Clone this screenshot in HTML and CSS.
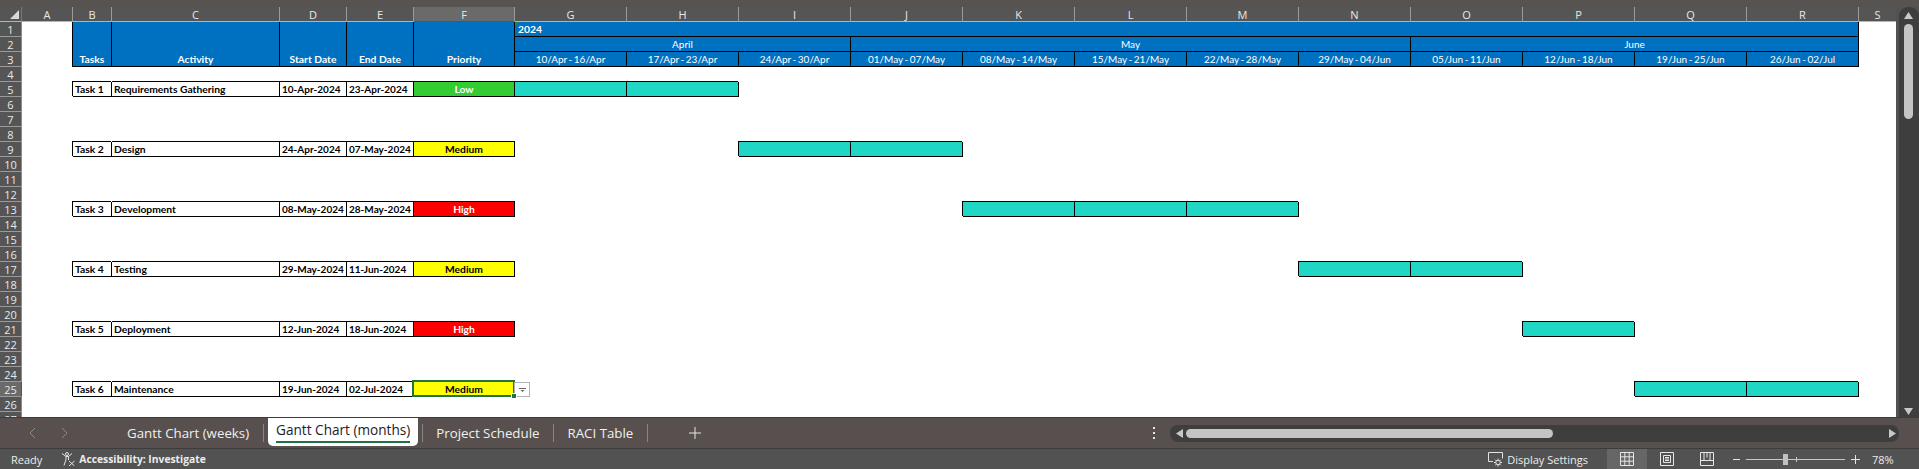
FILE: index.html
```html
<!doctype html>
<html>

<head>
  <meta charset="UTF-8">
  <title>Gantt Chart (months)</title>
  <link rel="stylesheet" href="styles.css">
</head>

<body>
  <div class="top-strip"></div>

  <div class="sheet-area">
    <div class="sheet">
      <table class="grid">
        <colgroup>
          <col class="c-rowhead">
          <col class="c-a">
          <col class="c-b">
          <col class="c-c">
          <col class="c-date">
          <col class="c-date">
          <col class="c-f">
          <col class="c-week" span="12">
          <col class="c-s">
        </colgroup>
        <thead>
          <tr>
            <th class="corner"><span class="corner-mark"></span></th>
            <th class="colhead">A</th>
            <th class="colhead">B</th>
            <th class="colhead">C</th>
            <th class="colhead">D</th>
            <th class="colhead">E</th>
            <th class="colhead colhead-on">F</th>
            <th class="colhead">G</th>
            <th class="colhead">H</th>
            <th class="colhead">I</th>
            <th class="colhead">J</th>
            <th class="colhead">K</th>
            <th class="colhead">L</th>
            <th class="colhead">M</th>
            <th class="colhead">N</th>
            <th class="colhead">O</th>
            <th class="colhead">P</th>
            <th class="colhead">Q</th>
            <th class="colhead">R</th>
            <th class="colhead colhead-last">S</th>
          </tr>
        </thead>
        <tbody>
          <tr>
            <th class="rowhead">1</th>
            <td></td>
            <td class="head head-first" rowspan="3">Tasks</td>
            <td class="head" rowspan="3">Activity</td>
            <td class="head" rowspan="3">Start Date</td>
            <td class="head" rowspan="3">End Date</td>
            <td class="head" rowspan="3">Priority</td>
            <td class="year" colspan="12"><span class="flag"></span>2024</td>
          </tr>
          <tr>
            <th class="rowhead">2</th>
            <td></td>
            <td class="band" colspan="3">April</td>
            <td class="band" colspan="5">May</td>
            <td class="band" colspan="4">June</td>
          </tr>
          <tr>
            <th class="rowhead">3</th>
            <td></td>
            <td class="band">10/Apr - 16/Apr</td>
            <td class="band">17/Apr - 23/Apr</td>
            <td class="band">24/Apr - 30/Apr</td>
            <td class="band">01/May - 07/May</td>
            <td class="band">08/May - 14/May</td>
            <td class="band">15/May - 21/May</td>
            <td class="band">22/May - 28/May</td>
            <td class="band">29/May - 04/Jun</td>
            <td class="band">05/Jun - 11/Jun</td>
            <td class="band">12/Jun - 18/Jun</td>
            <td class="band">19/Jun - 25/Jun</td>
            <td class="band">26/Jun - 02/Jul</td>
          </tr>
          <tr><th class="rowhead">4</th></tr>
          <tr>
            <th class="rowhead">5</th>
            <td></td>
            <td class="cell cell-first">Task 1</td>
            <td class="cell">Requirements Gathering</td>
            <td class="cell date">10-Apr-2024</td>
            <td class="cell date">23-Apr-2024</td>
            <td class="cell prio low">Low</td>
            <td class="bar"></td>
            <td class="bar"></td>
          </tr>
          <tr><th class="rowhead">6</th></tr>
          <tr><th class="rowhead">7</th></tr>
          <tr><th class="rowhead">8</th></tr>
          <tr>
            <th class="rowhead">9</th>
            <td></td>
            <td class="cell cell-first">Task 2</td>
            <td class="cell">Design</td>
            <td class="cell date">24-Apr-2024</td>
            <td class="cell date">07-May-2024</td>
            <td class="cell prio medium">Medium</td>
            <td colspan="2"></td>
            <td class="bar"></td>
            <td class="bar"></td>
          </tr>
          <tr><th class="rowhead">10</th></tr>
          <tr><th class="rowhead">11</th></tr>
          <tr><th class="rowhead">12</th></tr>
          <tr>
            <th class="rowhead">13</th>
            <td></td>
            <td class="cell cell-first">Task 3</td>
            <td class="cell">Development</td>
            <td class="cell date">08-May-2024</td>
            <td class="cell date">28-May-2024</td>
            <td class="cell prio high">High</td>
            <td colspan="4"></td>
            <td class="bar"></td>
            <td class="bar"></td>
            <td class="bar"></td>
          </tr>
          <tr><th class="rowhead">14</th></tr>
          <tr><th class="rowhead">15</th></tr>
          <tr><th class="rowhead">16</th></tr>
          <tr>
            <th class="rowhead">17</th>
            <td></td>
            <td class="cell cell-first">Task 4</td>
            <td class="cell">Testing</td>
            <td class="cell date">29-May-2024</td>
            <td class="cell date">11-Jun-2024</td>
            <td class="cell prio medium">Medium</td>
            <td colspan="7"></td>
            <td class="bar"></td>
            <td class="bar"></td>
          </tr>
          <tr><th class="rowhead">18</th></tr>
          <tr><th class="rowhead">19</th></tr>
          <tr><th class="rowhead">20</th></tr>
          <tr>
            <th class="rowhead">21</th>
            <td></td>
            <td class="cell cell-first">Task 5</td>
            <td class="cell">Deployment</td>
            <td class="cell date">12-Jun-2024</td>
            <td class="cell date">18-Jun-2024</td>
            <td class="cell prio high">High</td>
            <td colspan="9"></td>
            <td class="bar"></td>
          </tr>
          <tr><th class="rowhead">22</th></tr>
          <tr><th class="rowhead">23</th></tr>
          <tr><th class="rowhead">24</th></tr>
          <tr>
            <th class="rowhead rowhead-on">25</th>
            <td></td>
            <td class="cell cell-first">Task 6</td>
            <td class="cell">Maintenance</td>
            <td class="cell date">19-Jun-2024</td>
            <td class="cell date">02-Jul-2024</td>
            <td class="cell prio medium">
              Medium
              <span class="sel-frame"></span>
              <span class="handle"></span>
              <span class="dropdown">
                <svg width="7" height="4" viewBox="0 0 7 4"><path d="M0 0h7v1H0zM1.500 2h4L3.500 4z" fill="#666"/></svg>
              </span>
            </td>
            <td colspan="10"></td>
            <td class="bar"></td>
            <td class="bar"></td>
          </tr>
          <tr><th class="rowhead">26</th></tr>
          <tr><th class="rowhead">27</th></tr>
        </tbody>
      </table>
    </div>

    <div class="vscroll">
      <svg class="vs-up" width="9" height="7" viewBox="0 0 9 7"><path d="M4.500 0L9 7H0z" fill="#c8c8c8"/></svg>
      <div class="vs-thumb"></div>
      <svg class="vs-down" width="9" height="7" viewBox="0 0 9 7"><path d="M0 0h9L4.500 7z" fill="#c8c8c8"/></svg>
    </div>
  </div>

  <div class="tabbar">
    <div class="tabnav">
      <svg width="7" height="12" viewBox="0 0 7 12"><path d="M6 1L1 6l5 5" fill="none" stroke="#8a8a8a"/></svg>
      <svg width="7" height="12" viewBox="0 0 7 12"><path d="M1 1l5 5-5 5" fill="none" stroke="#8a8a8a"/></svg>
    </div>
    <div class="tab">Gantt Chart (weeks)</div>
    <span class="tabsep"></span>
    <div class="tab-on"><span class="tab-label">Gantt Chart (months)</span></div>
    <span class="tabsep"></span>
    <div class="tab">Project Schedule</div>
    <span class="tabsep"></span>
    <div class="tab">RACI Table</div>
    <span class="tabsep"></span>
    <svg class="tabadd" width="12" height="12" viewBox="0 0 12 12"><path d="M6 0v12M0 6h12" stroke="#e6e6e6" fill="none"/></svg>
    <div class="tabdots"><i></i><i></i><i></i></div>
    <div class="hscroll">
      <svg width="7" height="9" viewBox="0 0 7 9"><path d="M7 0v9L0 4.500z" fill="#c8c8c8"/></svg>
      <div class="hs-thumb"></div>
      <svg class="hs-right" width="7" height="9" viewBox="0 0 7 9"><path d="M0 0v9l7-4.500z" fill="#c8c8c8"/></svg>
    </div>
  </div>

  <div class="status">
    <span class="ready">Ready</span>
    <svg class="a11y" width="15" height="14" viewBox="0 0 15 14" fill="none" stroke="#e2e2e2">
      <circle cx="6" cy="2" r="1.500"/>
      <path d="M1 1.500l4 3h2.500l3.500-3M5 4.500v3L3 13.500M7.500 4.500V8"/>
      <path d="M8 9l5.500 5M13.500 9L8 14"/>
    </svg>
    <span class="a11y-text">Accessibility: Investigate</span>
    <div class="status-right">
      <svg class="disp" width="16" height="15" viewBox="0 0 16 15" fill="none" stroke="#e2e2e2">
        <path d="M5 9.500H.5V.5h14v6"/>
        <circle cx="10" cy="10.500" r="2.200"/>
        <path d="M10 6.500v1.800M10 12.700v1.800M6 10.500h1.800M12.200 10.500H14M7.200 7.700l1.300 1.300M11.500 12l1.300 1.300M7.200 13.300l1.300-1.300M11.500 9l1.300-1.300"/>
      </svg>
      <span class="disp-text">Display Settings</span>
      <div class="view view-on">
        <svg width="14" height="14" viewBox="0 0 14 14" fill="none" stroke="#e6e6e6"><path d="M.5.5h13v13H.5zM.5 4.800h13M.5 9.200h13M4.800.5v13M9.200.5v13"/></svg>
      </div>
      <div class="view">
        <svg width="14" height="14" viewBox="0 0 14 14" fill="none" stroke="#e6e6e6"><path d="M.5.5h13v13H.5zM3.500 3.500h7v7h-7zM5 5.500h4M5 7h4M5 8.500h4"/></svg>
      </div>
      <div class="view">
        <svg width="14" height="14" viewBox="0 0 14 14" fill="none" stroke="#e6e6e6"><path d="M.5.5h13v13H.5zM.5 8.500h3.500V.5M4 8.500h6V.5M10 8.500h3.500M7 .5v5"/></svg>
      </div>
      <div class="zoom">
        <svg width="7" height="7" viewBox="0 0 7 7"><path d="M0 3.500h7" stroke="#e6e6e6"/></svg>
        <div class="slider"><span class="slider-tick"></span><span class="slider-thumb"></span></div>
        <svg width="9" height="9" viewBox="0 0 9 9"><path d="M4.500 0v9M0 4.500h9" stroke="#e6e6e6"/></svg>
        <span class="zoom-value">78%</span>
      </div>
    </div>
  </div>
</body>

</html>
```

FILE: styles.css
```css
html,
body {
  margin: 0;
  height: 469px;
  overflow: hidden;
}

body {
  display: flex;
  flex-direction: column;
  background: #555150;
  font: normal 12px "Open Sans", sans-serif;
  color: #e8e8e8;
}

.top-strip {
  height: 7px;
  flex: none;
  background: #575350;
}

/* sheet */

.sheet-area {
  display: flex;
  height: 410px;
  flex: none;
}

.sheet {
  width: 1896px;
  flex: none;
  overflow: hidden;
  background: #fff;
}

.grid {
  table-layout: fixed;
  width: 1896px;
  border-collapse: separate;
  border-spacing: 0;
  font-family: Lato, "Open Sans", sans-serif;
  font-size: 10.3px;
  color: #000;
}

.c-rowhead { width: 22px; }
.c-a { width: 51px; }
.c-b { width: 39px; }
.c-c { width: 168px; }
.c-date { width: 67px; }
.c-f { width: 101px; }
.c-week { width: 112px; }
.c-s { width: 37px; }

.grid tr {
  height: 15px;
}

.grid th,
.grid td {
  box-sizing: border-box;
  height: 15px;
  padding: 0;
  line-height: 13px;
  white-space: nowrap;
  overflow: hidden;
}

.corner,
.colhead,
.rowhead {
  background: #555;
  color: #e8e8e8;
  font: normal 11px "Open Sans", sans-serif;
  text-align: center;
}

.corner {
  position: relative;
  border-right: 1px solid #777;
  border-bottom: 1px solid #b4b4b4;
}

.corner-mark {
  position: absolute;
  right: 2px;
  bottom: 2px;
  width: 0;
  height: 0;
  border-left: 9px solid transparent;
  border-bottom: 9px solid #d8d8d8;
}

.colhead {
  border-right: 1px solid #9a9a9a;
  border-bottom: 1px solid #b4b4b4;
}

.colhead-on {
  background: #6a6a6a;
  border-bottom-color: #217346;
}

.colhead-last {
  border-right: 0;
}

.rowhead {
  border-right: 1px solid #8a8a8a;
  border-bottom: 1px solid #9a9a9a;
}

.rowhead-on {
  background: #6a6a6a;
  border-right-color: #217346;
}

.head,
.band,
.year {
  background: #0070c0;
  color: #fff;
  border-right: 1px solid #000;
  border-bottom: 1px solid #000;
}

.head {
  font-weight: bold;
  text-align: center;
  vertical-align: bottom;
}

.head-first {
  box-shadow: -1px 0 0 #000;
}

.band {
  text-align: center;
  font-size: 10px;
  word-spacing: -1px;
}

.year {
  position: relative;
  padding-left: 3px !important;
  font-weight: bold;
}

.flag {
  position: absolute;
  left: 0;
  top: 0;
  width: 0;
  height: 0;
  border-top: 4px solid #1f8a3a;
  border-right: 4px solid transparent;
}

.cell {
  padding-left: 2px !important;
  font-weight: bold;
  background: #fff;
  border-right: 1px solid #000;
  border-bottom: 1px solid #000;
  box-shadow: 0 -1px 0 #000;
}

.cell-first {
  box-shadow: -1px -1px 0 #000;
}

.date {
  font-size: 10px;
}

.prio {
  position: relative;
  padding-left: 0 !important;
  text-align: center;
  overflow: visible !important;
}

.low {
  background: #33cc33;
  color: #fff;
}

.medium {
  background: #ff0;
}

.high {
  background: #f00;
  color: #fff;
}

.sel-frame {
  position: absolute;
  left: -2px;
  top: -2px;
  right: -1px;
  bottom: -1px;
  border: 2px solid #217346;
  z-index: 1;
}

.handle {
  position: absolute;
  right: -3px;
  bottom: -3px;
  width: 4px;
  height: 4px;
  background: #217346;
  border: 1px solid #fff;
  z-index: 3;
}

.dropdown {
  position: absolute;
  left: 100%;
  top: 0;
  box-sizing: border-box;
  width: 16px;
  height: 15px;
  display: flex;
  align-items: center;
  justify-content: center;
  background: #fff;
  border: 1px solid #aeb4bc;
  z-index: 2;
}

.bar {
  background: #20d6c4;
  border-right: 1px solid #000;
  border-bottom: 1px solid #000;
  box-shadow: -1px -1px 0 #000;
}

/* sheet scroll bar */

.vscroll {
  flex: 1;
  margin-left: 3px;
  display: flex;
  flex-direction: column;
  align-items: center;
  background: #3e3e3e;
  border-radius: 9px 9px 0 0;
  padding-right: 2px;
}

.vs-up {
  margin-top: 5px;
}

.vs-thumb {
  width: 9px;
  height: 95px;
  margin-top: 5px;
  background: #c4c4c4;
  border-radius: 5px;
}

.vs-down {
  margin-top: auto;
  margin-bottom: 2px;
}

/* sheet tabs */

.tabbar {
  height: 32px;
  flex: none;
  box-sizing: border-box;
  display: flex;
  align-items: center;
  background: #57504e;
  border-top: 1px solid #3c3c3c;
  border-bottom: 1px solid #3c3c3c;
  font-size: 13.3px;
  color: #f0f0f0;
}

.tabnav {
  display: flex;
  gap: 25px;
  margin-left: 29px;
  width: 85px;
  flex: none;
}

.tab {
  flex: none;
  padding: 0 14px 0 13px;
}

.tabsep {
  width: 1px;
  height: 18px;
  flex: none;
  background: #8a8583;
}

.tab-on {
  align-self: flex-start;
  flex: none;
  height: 28px;
  box-sizing: border-box;
  margin: 0 4px;
  padding: 2px 8px 0;
  background: #fff;
  color: #222;
  font-size: 13.6px;
  border-radius: 0 0 5px 5px;
}

.tab-label {
  display: block;
  height: 21px;
  border-bottom: 2px solid #217346;
}

.tabadd {
  margin-left: 41px;
  flex: none;
}

.tabdots {
  margin-left: auto;
  display: flex;
  flex-direction: column;
  gap: 3px;
  margin-right: 15px;
}

.tabdots i {
  width: 2px;
  height: 2px;
  background: #e6e6e6;
}

.hscroll {
  width: 729px;
  height: 17px;
  margin-right: 20px;
  flex: none;
  box-sizing: border-box;
  display: flex;
  align-items: center;
  padding: 0 3px 0 6px;
  gap: 3px;
  background: #3e3e3e;
  border-radius: 8px;
}

.hs-thumb {
  width: 367px;
  height: 9px;
  background: #c4c4c4;
  border-radius: 5px;
}

.hs-right {
  margin-left: auto;
}

/* status bar */

.status {
  height: 20px;
  flex: none;
  display: flex;
  align-items: center;
  background: #525252;
  font-size: 11px;
  color: #ececec;
}

.ready {
  margin-left: 11px;
}

.a11y {
  margin-left: 19px;
}

.a11y-text {
  margin-left: 3px;
  font-weight: bold;
  font-size: 10.3px;
}

.status-right {
  margin-left: auto;
  display: flex;
  align-items: center;
  height: 100%;
}

.disp-text {
  margin: 0 19px 0 3px;
}

.view {
  width: 40px;
  height: 100%;
  display: flex;
  align-items: center;
  justify-content: center;
}

.view-on {
  background: #666;
}

.zoom {
  display: flex;
  align-items: center;
  margin-left: 6px;
  width: 186px;
}

.slider {
  position: relative;
  width: 99px;
  height: 1px;
  margin: 0 6px;
  background: #c8c8c8;
}

.slider-tick {
  position: absolute;
  left: 50px;
  top: -2px;
  width: 1px;
  height: 5px;
  background: #c8c8c8;
}

.slider-thumb {
  position: absolute;
  left: 37px;
  top: -5px;
  width: 5px;
  height: 11px;
  background: #c0c0c0;
}

.zoom-value {
  margin-left: 12px;
}
```
